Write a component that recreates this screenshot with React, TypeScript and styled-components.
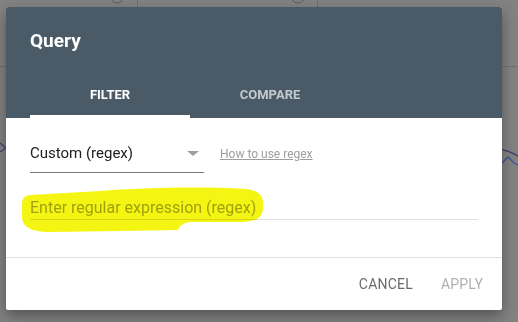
import styled, { createGlobalStyle } from "styled-components";

const GlobalStyle = createGlobalStyle`
  html, body {
    margin: 0;
    padding: 0;
    background: #828282;
  }
  body {
    font-family: Roboto, "Liberation Sans", Arial, sans-serif;
  }
`;

function BackdropArt() {
  return (
    <Art width="518" height="322" viewBox="0 0 518 322">
      <circle cx="117" cy="-3" r="6" fill="none" stroke="#5a5a5a" strokeWidth="1" />
      <line x1="137.5" y1="0" x2="137.5" y2="8" stroke="#6c6c6c" />
      <circle cx="298" cy="-3" r="6" fill="none" stroke="#5a5a5a" strokeWidth="1" />
      <line x1="317.5" y1="0" x2="317.5" y2="8" stroke="#6c6c6c" />
      <line x1="0" y1="66.5" x2="8" y2="66.5" stroke="#707070" />
      <line x1="500" y1="66.5" x2="518" y2="66.5" stroke="#707070" />
      <polyline points="0,143 6,148 0,152" fill="none" stroke="#423d78" strokeWidth="1.3" />
      <polyline points="500,149 510,152 518,156" fill="none" stroke="#3a3568" strokeWidth="1.3" />
      <polyline points="502,163 508,157 514,163 518,165" fill="none" stroke="#3f5290" strokeWidth="1.3" />
    </Art>
  );
}

function Highlight() {
  return (
    <Marker width="250" height="50" viewBox="0 0 250 50">
      <path
        d="M2 20 C2 13 4 11 10 10 L80 6 C120 3 180 1 225 4 C240 5 244 12 243 22 C243 32 238 37 220 37 L170 37 C162 38 160 41 158 45 L100 46 L30 47 C12 47 2 42 2 32 Z"
        fill="#f5f514"
      />
    </Marker>
  );
}

export default function App() {
  return (
    <>
      <GlobalStyle />
      <Backdrop>
        <BackdropArt />
        <Dialog>
          <Header>
            <Title>Query</Title>
            <Tabs>
              <Tab $active>FILTER</Tab>
              <Tab>COMPARE</Tab>
            </Tabs>
          </Header>
          <Body>
            <Row>
              <Select>
                <SelectLabel>Custom (regex)</SelectLabel>
                <Caret />
              </Select>
              <HelpLink href="#">How to use regex</HelpLink>
            </Row>
            <Field>
              <Input placeholder="Enter regular expression (regex)" />
              <Highlight />
            </Field>
          </Body>
          <Footer>
            <Action>CANCEL</Action>
            <Action $disabled>APPLY</Action>
          </Footer>
        </Dialog>
      </Backdrop>
    </>
  );
}

const Backdrop = styled.div`
  position: relative;
  width: 518px;
  height: 322px;
  overflow: hidden;
  background: #828282;
  padding-top: 7px;
  box-sizing: border-box;
`;

const Art = styled.svg`
  position: absolute;
  left: 0;
  top: 0;
`;

const Dialog = styled.div`
  position: relative;
  margin-left: 6px;
  width: 496px;
  background: #ffffff;
  border-radius: 2px;
  overflow: hidden;
  box-shadow: 0 6px 14px rgba(0, 0, 0, 0.35);
`;

const Header = styled.div`
  height: 111px;
  background: #4a5b67;
  padding: 22px 24px 0;
  box-sizing: border-box;
  display: flex;
  flex-direction: column;
`;

const Title = styled.div`
  color: #ffffff;
  font-size: 19px;
  font-weight: 700;
  line-height: 24px;
`;

const Tabs = styled.div`
  display: flex;
  margin-top: auto;
  height: 48px;
`;

const Tab = styled.div<{ $active?: boolean }>`
  width: 160px;
  display: flex;
  align-items: center;
  justify-content: center;
  font-size: 13px;
  font-weight: 700;
  color: ${(p) => (p.$active ? "#ffffff" : "#c3cace")};
  border-bottom: 3px solid ${(p) => (p.$active ? "#ffffff" : "transparent")};
  box-sizing: border-box;
  padding-top: 3px;
`;

const Body = styled.div`
  height: 140px;
  padding: 19px 24px 0;
  box-sizing: border-box;
  border-bottom: 1px solid #e0e0e0;
`;

const Row = styled.div`
  display: flex;
  align-items: center;
`;

const Select = styled.div`
  width: 174px;
  height: 36px;
  display: flex;
  align-items: center;
  justify-content: space-between;
  border-bottom: 1px solid #7a7a7a;
  box-sizing: border-box;
  padding: 0 5px 3px 0;
`;

const SelectLabel = styled.span`
  font-size: 15px;
  color: #212121;
`;

const Caret = styled.span`
  width: 0;
  height: 0;
  border-left: 6px solid transparent;
  border-right: 6px solid transparent;
  border-top: 5px solid #9e9e9e;
`;

const HelpLink = styled.a`
  margin-left: 16px;
  font-size: 12px;
  color: #9e9e9e;
  text-decoration: underline;
  padding-bottom: 2px;
`;

const Field = styled.div`
  position: relative;
  margin-top: 17px;
  height: 30px;
  border-bottom: 1px solid #e0e0e0;
  box-sizing: border-box;
`;

const Input = styled.input`
  width: 100%;
  height: 29px;
  border: none;
  outline: none;
  padding: 5px 0 0;
  margin: 0;
  box-sizing: border-box;
  font-family: Roboto, "Liberation Sans", Arial, sans-serif;
  font-size: 16px;
  background: transparent;
  color: #212121;

  &::placeholder {
    color: #a8a8a8;
  }
`;

const Marker = styled.svg`
  position: absolute;
  left: -10px;
  top: -5px;
  mix-blend-mode: multiply;
  pointer-events: none;
`;

const Footer = styled.div`
  height: 52px;
  display: flex;
  align-items: center;
  justify-content: flex-end;
  gap: 28px;
  padding: 0 19px 0 0;
`;

const Action = styled.span<{ $disabled?: boolean }>`
  font-size: 14px;
  color: ${(p) => (p.$disabled ? "#b0b0b0" : "#6b6b6b")};
  letter-spacing: 0.2px;
`;
